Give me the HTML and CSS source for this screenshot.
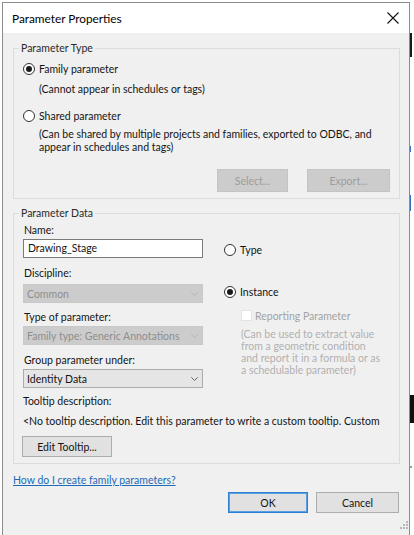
FILE: index.html
```html
<!DOCTYPE html>
<html>
<head>
<meta charset="utf-8">
<title>Parameter Properties</title>
<link rel="stylesheet" href="styles.css">
</head>
<body>
<div class="backdrop" aria-hidden="true">
  <span class="bd bd-1"></span>
  <span class="bd bd-2"></span>
  <span class="bd bd-3"></span>
  <span class="bd bd-4"></span>
  <span class="bd bd-5"></span>
</div>
<div class="window">
  <div class="titlebar">
    <span class="title">Parameter Properties</span>
    <svg class="close" width="12" height="12" viewBox="0 0 12 12"><path d="M0.5 0.5 L11.5 11.5 M11.5 0.5 L0.5 11.5" stroke="#111" stroke-width="1.1" fill="none"/></svg>
  </div>
  <div class="content">
    <fieldset class="group g1">
      <legend>Parameter Type</legend>
      <div class="radio-row r-family"><span class="radio checked"></span><span>Family parameter</span></div>
      <p class="note n-family">(Cannot appear in schedules or tags)</p>
      <div class="radio-row r-shared"><span class="radio"></span><span>Shared parameter</span></div>
      <p class="note n-shared">(Can be shared by multiple projects and families, exported to ODBC, and<br>appear in schedules and tags)</p>
      <div class="btn-row">
        <button class="btn disabled w-select">Select...</button>
        <button class="btn disabled w-export">Export...</button>
      </div>
    </fieldset>

    <fieldset class="group g2">
      <legend>Parameter Data</legend>
      <div class="cols">
        <div class="col-left">
          <div class="label l-name">Name:</div>
          <div class="input">Drawing_Stage</div>
          <div class="label l-disc">Discipline:</div>
          <div class="select disabled"><span>Common</span><svg class="chev" width="7" height="4" viewBox="0 0 7 4"><path d="M0.3 0.3 L3.5 3.5 L6.7 0.3" stroke="#b4b4b4" fill="none" stroke-width="1"/></svg></div>
          <div class="label l-type">Type of parameter:</div>
          <div class="select disabled s-type"><span>Family type: Generic Annotations</span><svg class="chev" width="7" height="4" viewBox="0 0 7 4"><path d="M0.3 0.3 L3.5 3.5 L6.7 0.3" stroke="#b4b4b4" fill="none" stroke-width="1"/></svg></div>
          <div class="label l-group">Group parameter under:</div>
          <div class="select s-group"><span>Identity Data</span><svg class="chev" width="7" height="4" viewBox="0 0 7 4"><path d="M0.3 0.3 L3.5 3.5 L6.7 0.3" stroke="#666" fill="none" stroke-width="1"/></svg></div>
        </div>
        <div class="col-right">
          <div class="radio-row r-type"><span class="radio"></span><span>Type</span></div>
          <div class="radio-row r-instance"><span class="radio checked"></span><span>Instance</span></div>
          <div class="check-row"><span class="checkbox"></span><span>Reporting Parameter</span></div>
          <p class="gray-note">(Can be used to extract value<br>from a geometric condition<br>and report it in a formula or as<br>a schedulable parameter)</p>
        </div>
      </div>
      <div class="label l-tooltip">Tooltip description:</div>
      <div class="tooltip-text">&lt;No tooltip description. Edit this parameter to write a custom tooltip. Custom</div>
      <button class="btn edit">Edit Tooltip...</button>
    </fieldset>

    <a class="help" href="#">How do I create family parameters?</a>
    <div class="footer">
      <button class="btn ok">OK</button>
      <button class="btn cancel">Cancel</button>
    </div>
    <svg class="grip" width="8" height="8" viewBox="0 0 8 8">
      <rect x="6" y="0" width="2" height="2" fill="#b8b8b8"/>
      <rect x="3" y="3" width="2" height="2" fill="#b8b8b8"/>
      <rect x="6" y="3" width="2" height="2" fill="#b8b8b8"/>
      <rect x="0" y="6" width="2" height="2" fill="#b8b8b8"/>
      <rect x="3" y="6" width="2" height="2" fill="#b8b8b8"/>
      <rect x="6" y="6" width="2" height="2" fill="#b8b8b8"/>
    </svg>
  </div>
</div>
</body>
</html>
```

FILE: styles.css
```css
* { box-sizing: border-box; }

html, body {
  margin: 0;
  padding: 0;
  background: #ffffff;
  overflow: hidden;
}

body {
  font-family: Lato, "Noto Sans", "Liberation Sans", sans-serif;
  font-size: 10.5px;
  color: #141414;
  position: relative;
}

/* pieces of the application behind the dialog, visible at the right edge */
.backdrop {
  position: absolute;
  left: 410px;
  top: 0;
  width: 4px;
  height: 535px;
}
.bd { position: absolute; left: 0; display: block; }
.bd-1 { top: 33px; height: 24px; width: 2px; background: #1a1a1a; }
.bd-2 { top: 146px; height: 6px; width: 1px; background: #3a6fc0; }
.bd-3 { top: 195px; height: 16px; width: 1px; background: #3a6fc0; }
.bd-4 { top: 395px; height: 28px; width: 4px; background: #111; }
.bd-5 { top: 466px; height: 2px; width: 2px; background: #9a9a9a; }

.window {
  margin: 2px 0 0 2px;
  width: 408px;
  height: 533px;
  border: 1px solid #8c8c8c;
  border-bottom: none;
  display: flex;
  flex-direction: column;
  position: relative;
}

.titlebar {
  height: 30px;
  flex: none;
  background: #ffffff;
  display: flex;
  align-items: center;
  justify-content: space-between;
  padding: 0 10px 0 9px;
}

.title {
  font-size: 11.8px;
  color: #000;
}

.close { display: block; }

.content {
  flex: 1;
  background: #f0f0f0;
  display: flex;
  flex-direction: column;
  position: relative;
}

.group {
  border: 1px solid #dcdcdc;
  margin: 0 9px 0 10px;
  padding: 0 9px 6px 9px;
  min-width: 0;
}

.g1 { margin-top: 8px; }
.g2 { margin-top: 7px; padding-bottom: 6px; }

legend {
  line-height: 14px;
  padding: 0 2px;
  margin-left: -4px;
  color: #2a2a2a;
}

p { margin: 0; }

.radio-row {
  display: flex;
  align-items: center;
  gap: 4px;
  height: 16px;
  line-height: 16px;
  white-space: nowrap;
}

.radio {
  width: 12px;
  height: 12px;
  border: 1px solid #333;
  border-radius: 50%;
  background: #fff;
  display: flex;
  align-items: center;
  justify-content: center;
  flex: none;
}

.radio.checked::after {
  content: "";
  width: 6px;
  height: 6px;
  border-radius: 50%;
  background: #1a1a1a;
}

.r-family { margin-top: 6px; }
.r-shared { margin-top: 12px; }

.note {
  line-height: 13px;
  padding-left: 16px;
  white-space: nowrap;
}
.n-family { margin-top: 6px; }
.n-shared { margin-top: 4px; }

.btn-row {
  display: flex;
  justify-content: flex-end;
  gap: 19px;
  margin-top: 15px;
}

.btn {
  font: inherit;
  height: 23px;
  border: 1px solid #adadad;
  background: #e1e1e1;
  color: #141414;
  padding: 0;
  display: flex;
  align-items: center;
  justify-content: center;
}

.btn.disabled {
  background: #cccccc;
  border-color: #c4c4c4;
  color: #9d9d9d;
}

.w-select { width: 71px; }
.w-export { width: 83px; }

.cols {
  display: flex;
}

.col-left {
  width: 180px;
  flex: none;
}

.label {
  line-height: 13px;
  padding-left: 1px;
  white-space: nowrap;
}

.l-name { margin-top: 4px; }
.l-disc { margin-top: 9px; }
.l-type { margin-top: 8px; }
.l-group { margin-top: 9px; }

.input {
  margin-top: 2px;
  height: 19px;
  background: #fff;
  border: 1px solid #7a7a7a;
  padding-left: 4px;
  line-height: 17px;
}

.select {
  height: 19px;
  border: 1px solid #acacac;
  background: #e5e5e5;
  display: flex;
  align-items: center;
  justify-content: space-between;
  padding: 0 4px 0 3px;
  white-space: nowrap;
  overflow: hidden;
}

.l-disc + .select { margin-top: 4px; }
.s-type { margin-top: 2px; }
.s-group { margin-top: 2px; }

.select.disabled {
  background: #cccccc;
  border-color: #c8c8c8;
  color: #8e8e8e;
}

.chev { display: block; flex: none; }

.col-right {
  margin-left: 21px;
}

.r-type { margin-top: 22px; }
.r-instance { margin-top: 26px; }

.check-row {
  display: flex;
  align-items: center;
  gap: 3px;
  margin-top: 9px;
  margin-left: 17px;
  height: 13px;
  color: #a3a3a3;
  white-space: nowrap;
}

.checkbox {
  width: 11px;
  height: 11px;
  background: #fff;
  border: 1px solid #e2e2e2;
  flex: none;
}

.gray-note {
  margin-top: 6px;
  margin-left: 17px;
  line-height: 12px;
  color: #b0b0b0;
  white-space: nowrap;
}

.l-tooltip {
  margin-top: 7px;
  padding-left: 0;
}

.tooltip-text {
  margin-top: 7px;
  line-height: 13px;
  white-space: nowrap;
}

.btn.edit {
  margin-top: 8px;
  width: 90px;
  height: 21px;
  margin-left: -1px;
}

.help {
  margin: 10px 0 0 10px;
  line-height: 13px;
  color: #1c6ab8;
  text-decoration: underline;
  align-self: flex-start;
}

.footer {
  display: flex;
  justify-content: flex-end;
  gap: 8px;
  margin: 5px 10px 0 0;
}

.btn.ok {
  width: 80px;
  height: 21px;
  border: 1px solid #2b7fd4;
  box-shadow: inset 0 0 0 1px #5aa0e0;
}

.btn.cancel {
  width: 83px;
  height: 21px;
}

.grip {
  position: absolute;
  right: 1px;
  bottom: 6px;
}
```
